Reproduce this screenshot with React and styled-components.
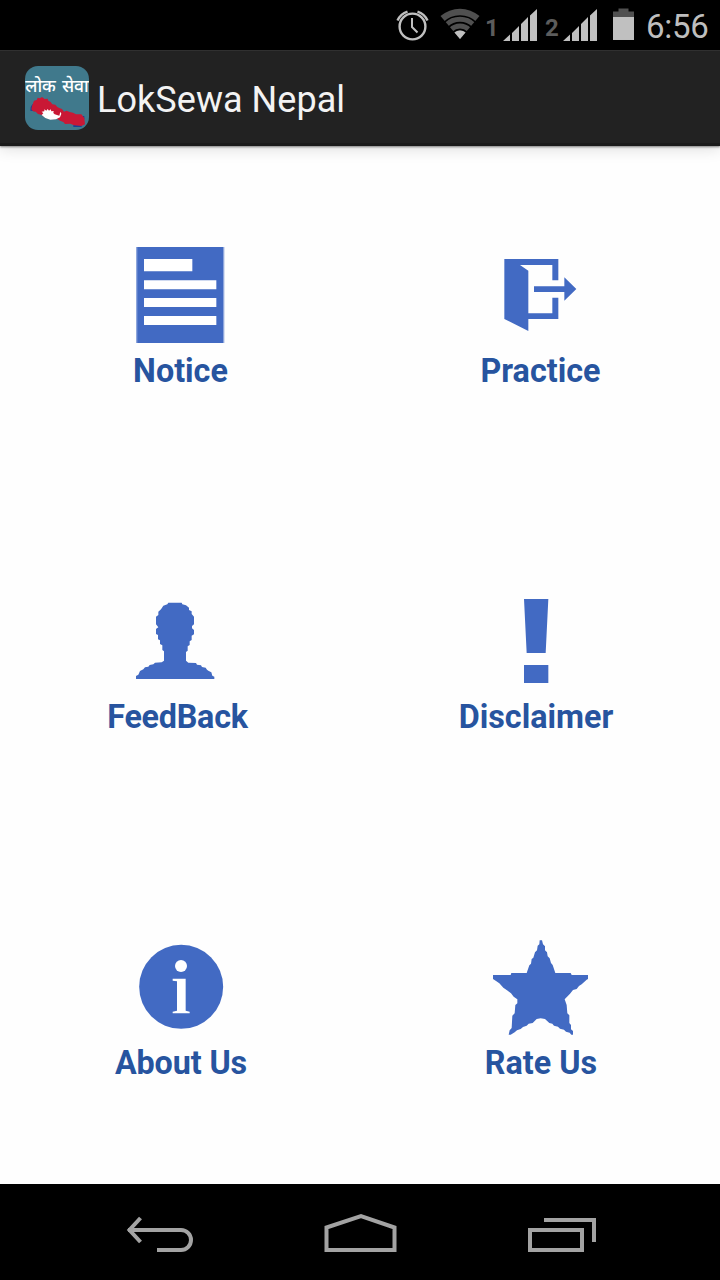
import React from "react";
import styled, { createGlobalStyle } from "styled-components";

const GlobalStyle = createGlobalStyle`
  * { box-sizing: border-box; }
  body { margin: 0; background: #fff; font-family: Roboto, "Noto Sans", sans-serif; }
  svg { display: block; flex: none; }
`;

const Screen = styled.div`
  width: 720px;
  height: 1280px;
  display: flex;
  flex-direction: column;
  overflow: hidden;
  background: #fefefe;
`;

const StatusBar = styled.header`
  height: 50px;
  flex: none;
  display: flex;
  justify-content: flex-end;
  align-items: flex-start;
  padding: 8px 12px 0 0;
  background: #000;
`;

const SimNumber = styled.span`
  width: ${(p) => p.$width}px;
  margin-left: ${(p) => p.$gap}px;
  padding-top: 5px;
  color: #5c5c5c;
  font-size: 24px;
  line-height: 30px;
  font-weight: 700;
`;

const StatusIcon = styled.svg`
  margin-left: ${(p) => p.$gap || 0}px;
`;

const Clock = styled.time`
  width: 62px;
  margin-left: 12px;
  padding-top: 1px;
  color: #bebebe;
  font-size: 33px;
  line-height: 36px;
  letter-spacing: -0.3px;
  white-space: nowrap;
`;

const ActionBar = styled.div`
  height: 96px;
  flex: none;
  display: flex;
  align-items: center;
  padding-left: 25px;
  background: #222;
  border-top: 1px solid #303030;
  border-bottom: 3px solid #1b1b1b;
  box-shadow: 0 1px 2px rgba(0, 0, 0, 0.45), 0 3px 14px rgba(0, 0, 0, 0.13);
  z-index: 1;
`;

const AppLogo = styled.div`
  width: 64px;
  height: 64px;
  margin-top: 1px;
  display: flex;
  flex-direction: column;
  align-items: center;
  border-radius: 13px;
  background: #40798c;
  overflow: hidden;
`;

const LogoText = styled.span`
  height: 29px;
  color: #fff;
  font-family: "Noto Sans", "Noto Sans Devanagari", sans-serif;
  font-size: 17.5px;
  font-weight: 500;
  line-height: 39px;
  word-spacing: 1.5px;
  white-space: nowrap;
`;

const Title = styled.h1`
  margin: 5px 0 0 8px;
  color: #f3f3f3;
  font-size: 36px;
  line-height: 44px;
  font-weight: 400;
  letter-spacing: 0.05px;
  white-space: nowrap;
`;

const Menu = styled.main`
  flex: 1;
  display: grid;
  grid-template: repeat(3, 1fr) / repeat(2, 1fr);
`;

const Tile = styled.div`
  display: flex;
  flex-direction: column;
  align-items: center;
  justify-content: center;
  padding-right: ${(p) => p.$inset || 0}px;
`;

const TileIcon = styled.svg`
  width: 96px;
  height: 96px;
  fill: #426ac3;
`;

const Label = styled.span`
  height: 48px;
  padding-top: 5px;
  padding-left: ${(p) => p.$nudge || 0}px;
  color: #27549f;
  font-size: 32.3px;
  line-height: 46px;
  font-weight: 700;
  letter-spacing: ${(p) => p.$tracking || 0}px;
  white-space: nowrap;
`;

const NavBar = styled.nav`
  height: 96px;
  flex: none;
  display: flex;
  justify-content: space-between;
  padding: 28px 122px 0 123px;
  background: #000;
`;

const NavIcon = styled.svg`
  fill: none;
  stroke: #a3a3a3;
  stroke-width: 4;
`;

const Signal = ({ gap }) => (
  <StatusIcon $gap={gap} width="34" height="33" viewBox="0 0 34 33" fill="#c0c0c0">
    <path d="M0 33L7 26.5V33ZM9 33V25L16 18V33ZM18 33V16L25 9V33ZM27 33V7.5L34 1V33Z" />
  </StatusIcon>
);

const tiles = [
  {
    label: "Notice",
    nudge: 1,
    tracking: 0,
    viewBox: "66 51 288 288",
    art: (
      <>
        <path d="M78 51H343V339H78Z" fill="#8ea6dc" />
        <path d="M82 51H339V339H82Z" />
        <path d="M102 87H247V124H102ZM102 151H319V178H102ZM102 204H319V231H102ZM102 258H319V285H102Z" fill="#fff" />
      </>
    ),
  },
  {
    label: "Practice",
    nudge: 1,
    viewBox: "66 51 288 288",
    art: (
      <path d="M103 87H265V151H247V105H150L175 122V250H247V203H265V267H175V303L103 267ZM192 169H283V142L319 177L283 212V186H192Z" />
    ),
  },
  {
    label: "FeedBack",
    inset: 8,
    nudge: 3,
    tracking: -0.25,
    viewBox: "84 9 288 288",
    art: (
      <path d="M205 38H245L247 43L258 46L267 53V60L275 64V72L282 80V103L276 108V115L282 120V133L275 137V150L269 154V165L263 169V182L258 186V212L265 218L288 219L291 224L303 226L306 231L317 233L321 239L325 242L334 247L337 257L343 260V267H108V258L115 254L120 243L130 238L135 232L145 230L149 225L160 223L165 218L185 217L192 212V184L187 180V166L180 162V151L174 148V135L168 132V117L175 112L168 103V80L175 75V65L183 58L190 47L202 43Z" />
    ),
  },
  {
    label: "Disclaimer",
    inset: 8,
    viewBox: "114 9 288 288",
    art: <path d="M222 27H295L287 189H230ZM222 225H295V279H222Z" />,
  },
  {
    label: "About Us",
    nudge: 2,
    tracking: -0.1,
    viewBox: "96 27 288 288",
    art: (
      <>
        <circle cx="243.5" cy="170.5" r="126" />
        <circle cx="243" cy="108" r="18" fill="#fff" />
        <path d="M218 146H257V242L269 245V250H218V245L231 242V154L218 152Z" fill="#fff" />
      </>
    ),
  },
  {
    label: "Rate Us",
    nudge: 2,
    viewBox: "66 27 288 288",
    art: (
      <path d="M209 31H216L219 43L225 49V61L231 67L233 79L239 85L243 99L248 105L256 129H302L305 135H357V146L350 149L335 163L327 168L320 177L309 180L300 191L284 208L290 225L292 250L298 256V279L303 285V298L309 303V314H304L299 308L288 305L282 299L270 296L264 290L252 287L247 281L238 279L225 267L212 265L200 267L188 279L176 281L170 287L159 291L152 297L141 301L134 307L122 314H116L119 301L125 294L127 257L134 250L136 225L142 220V208L131 200L123 190L111 181L100 173L88 160L77 152L69 147V135H122L124 129H170L178 106L183 101L185 87L190 83L195 67L201 61L203 47L208 43Z" />
    ),
  },
];

export default function App() {
  return (
    <Screen>
      <GlobalStyle />
      <StatusBar>
        <StatusIcon width="34" height="34" viewBox="0 0 34 34" fill="none" stroke="#c0c0c0">
          <circle cx="16.5" cy="18.5" r="12.9" strokeWidth="2.4" />
          <path d="M16 10V19L21.5 24.5" strokeWidth="2" />
          <path d="M1.5 12.5Q4.5 6 11.5 3.7M21.5 3.7Q28.5 6 31.5 12.5" strokeWidth="2.4" />
        </StatusIcon>
        <StatusIcon $gap={10} width="40" height="34" viewBox="0 0 40 34">
          <path d="M20 31L0.5 8A30 30 0 0 1 39.5 8Z" fill="#505050" />
          <g fill="none" stroke="#000" strokeWidth="1.7">
            <circle cx="20" cy="31" r="23" />
            <circle cx="20" cy="31" r="16.3" />
            <circle cx="20" cy="31" r="9.6" />
          </g>
          <path d="M20 31L14.5 24.5A8.5 8.5 0 0 1 25.5 24.5Z" fill="#c0c0c0" />
        </StatusIcon>
        <SimNumber $gap={5} $width={14}>1</SimNumber>
        <Signal gap={4} />
        <SimNumber $gap={8} $width={14}>2</SimNumber>
        <Signal gap={4} />
        <StatusIcon $gap={16} width="21" height="32" viewBox="0 0 21 32">
          <path d="M5.5 0.5H15.5V3.5H21V9H0V3.5H5.5Z" fill="#505050" />
          <path d="M0 9H21V32H0Z" fill="#c0c0c0" />
        </StatusIcon>
        <Clock>6:56</Clock>
      </StatusBar>

      <ActionBar>
        <AppLogo>
          <LogoText>लोक सेवा</LogoText>
          <svg width="64" height="35" viewBox="15 87 192 105">
            <path d="M32 123L37 115L48 118L45 136L31 134ZM180 150H193V160H180ZM160 177H185V183H160Z" fill="#174396" />
            <path d="M36 122L42 106L50 104L53 97L60 99L66 95L74 101L83 100L85 106L92 110L97 117L106 118L112 125L118 128L126 131L132 139L140 136L149 140L159 142L168 147L184 147L193 158L195 177L184 182L162 180L151 175L135 176L130 170L120 166L111 160L101 162L84 160L72 154L66 149L54 146L47 139L39 138L34 132Z" transform="translate(0 -2)" fill="#c91835" />
            <path d="M65 149L70 144L65 139L73 138L73 132L79 136L83 131L87 136L92 132L94 138L101 137L100 143L104 147L118 151L121 139L124 145L120 156L108 162L91 163L76 158Z" transform="translate(0 -2)" fill="#fff" />
          </svg>
        </AppLogo>
        <Title>LokSewa Nepal</Title>
      </ActionBar>

      <Menu>
        {tiles.map((t) => (
          <Tile key={t.label} $inset={t.inset}>
            <TileIcon viewBox={t.viewBox}>{t.art}</TileIcon>
            <Label $nudge={t.nudge} $tracking={t.tracking}>{t.label}</Label>
          </Tile>
        ))}
      </Menu>

      <NavBar>
        <NavIcon width="72" height="44" viewBox="0 0 72 44">
          <path d="M5 18H58A10 10 0 0 1 58 38H34" />
          <path d="M17.5 6L6.5 18L17.5 30" />
        </NavIcon>
        <NavIcon width="74" height="44" viewBox="0 0 74 44">
          <path d="M3 38V15.5L37.5 4.2L71 15.5V38Z" transform="translate(-0.5 0)" />
        </NavIcon>
        <NavIcon width="72" height="44" viewBox="0 0 72 44">
          <path d="M4 18H56V38H4ZM18 8H68V30" />
        </NavIcon>
      </NavBar>
    </Screen>
  );
}
